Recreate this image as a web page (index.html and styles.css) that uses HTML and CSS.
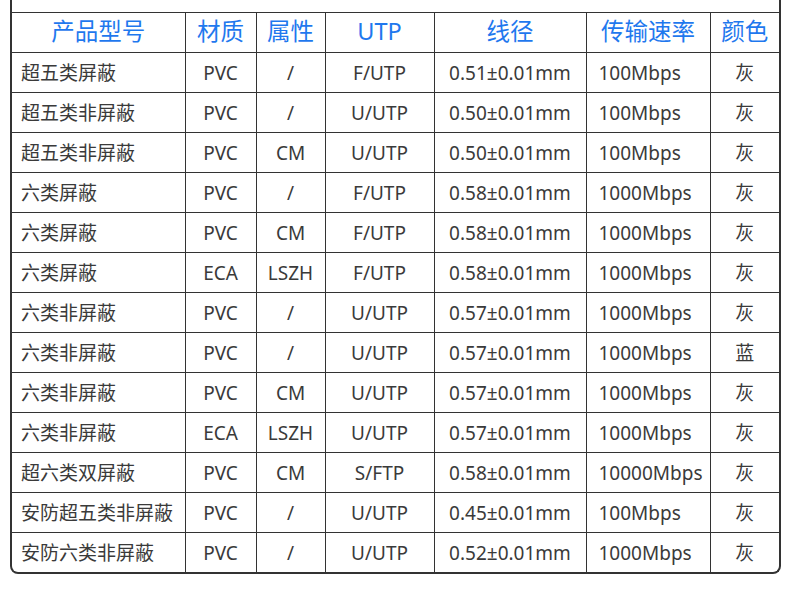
FILE: index.html
```html
<!DOCTYPE html>
<html lang="zh">
<head>
<meta charset="utf-8">
<link rel="stylesheet" href="styles.css">
</head>
<body>
<div class="frame">
<table class="spec">
<colgroup>
<col class="c1"><col class="c2"><col class="c3"><col class="c4"><col class="c5"><col class="c6"><col class="c7">
</colgroup>
<thead>
<tr><th>产品型号</th><th>材质</th><th>属性</th><th>UTP</th><th>线径</th><th>传输速率</th><th>颜色</th></tr>
</thead>
<tbody>
<tr><td class="l">超五类屏蔽</td><td>PVC</td><td>/</td><td>F/UTP</td><td>0.51±0.01mm</td><td class="l">100Mbps</td><td>灰</td></tr>
<tr><td class="l">超五类非屏蔽</td><td>PVC</td><td>/</td><td>U/UTP</td><td>0.50±0.01mm</td><td class="l">100Mbps</td><td>灰</td></tr>
<tr><td class="l">超五类非屏蔽</td><td>PVC</td><td>CM</td><td>U/UTP</td><td>0.50±0.01mm</td><td class="l">100Mbps</td><td>灰</td></tr>
<tr><td class="l">六类屏蔽</td><td>PVC</td><td>/</td><td>F/UTP</td><td>0.58±0.01mm</td><td class="l">1000Mbps</td><td>灰</td></tr>
<tr><td class="l">六类屏蔽</td><td>PVC</td><td>CM</td><td>F/UTP</td><td>0.58±0.01mm</td><td class="l">1000Mbps</td><td>灰</td></tr>
<tr><td class="l">六类屏蔽</td><td>ECA</td><td>LSZH</td><td>F/UTP</td><td>0.58±0.01mm</td><td class="l">1000Mbps</td><td>灰</td></tr>
<tr><td class="l">六类非屏蔽</td><td>PVC</td><td>/</td><td>U/UTP</td><td>0.57±0.01mm</td><td class="l">1000Mbps</td><td>灰</td></tr>
<tr><td class="l">六类非屏蔽</td><td>PVC</td><td>/</td><td>U/UTP</td><td>0.57±0.01mm</td><td class="l">1000Mbps</td><td>蓝</td></tr>
<tr><td class="l">六类非屏蔽</td><td>PVC</td><td>CM</td><td>U/UTP</td><td>0.57±0.01mm</td><td class="l">1000Mbps</td><td>灰</td></tr>
<tr><td class="l">六类非屏蔽</td><td>ECA</td><td>LSZH</td><td>U/UTP</td><td>0.57±0.01mm</td><td class="l">1000Mbps</td><td>灰</td></tr>
<tr><td class="l">超六类双屏蔽</td><td>PVC</td><td>CM</td><td>S/FTP</td><td>0.58±0.01mm</td><td class="l">10000Mbps</td><td>灰</td></tr>
<tr><td class="l">安防超五类非屏蔽</td><td>PVC</td><td>/</td><td>U/UTP</td><td>0.45±0.01mm</td><td class="l">100Mbps</td><td>灰</td></tr>
<tr><td class="l">安防六类非屏蔽</td><td>PVC</td><td>/</td><td>U/UTP</td><td>0.52±0.01mm</td><td class="l">1000Mbps</td><td>灰</td></tr>
</tbody>
</table>
</div>
</body>
</html>
```

FILE: styles.css
```css
html, body {
  margin: 0;
  padding: 0;
  background: #fff;
}
body {
  padding: 0 9px 0 10px;
  font-family: "Noto Sans", "Noto Sans CJK SC", sans-serif;
  color: #3a3a3a;
}
.frame {
  width: 771px;
  box-sizing: border-box;
  padding-top: 12px;
  border-left: 2px solid #333;
  border-right: 2px solid #333;
  border-bottom: 2px solid #333;
  border-radius: 0 0 8px 8px;
}
.spec {
  width: 767px;
  table-layout: fixed;
  border-collapse: collapse;
}
.c1 { width: 173px; }
.c2 { width: 71px; }
.c3 { width: 69px; }
.c4 { width: 109px; }
.c5 { width: 152px; }
.c6 { width: 124px; }
.c7 { width: 69px; }
.spec th, .spec td {
  border: 1px solid #333;
  line-height: 24px;
  text-align: center;
  white-space: nowrap;
  overflow: visible;
}
.spec tr > :first-child { border-left: none; }
.spec tr > :last-child { border-right: none; }
.spec tbody tr:last-child td { border-bottom: none; }
.spec th {
  padding: 0 0 3px;
  height: 36px;
  font-weight: normal;
  font-size: 23.5px;
  color: #1f78ee;
}
.spec td {
  padding: 0 0 0;
  height: 39px;
  font-size: 19px;
}
.spec td.l {
  text-align: left;
  padding-left: 9px;
}
.spec td:nth-child(6) {
  padding-left: 12px;
}
```
